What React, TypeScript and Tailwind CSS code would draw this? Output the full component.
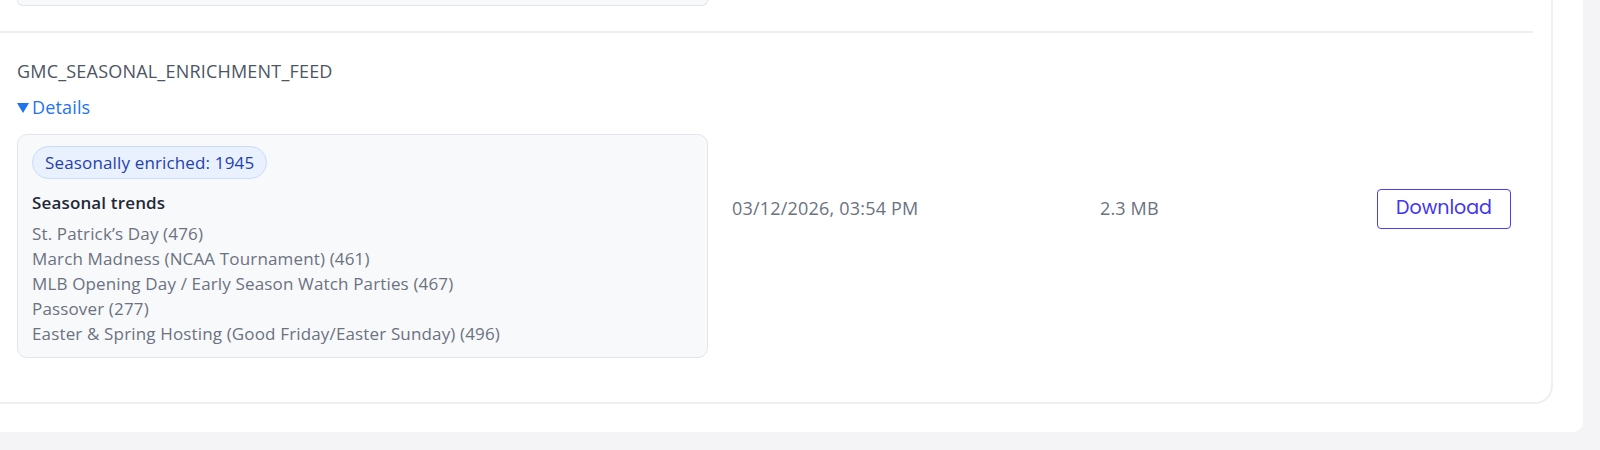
import React from "react";

const trends = [
  "St. Patrick\u2019s Day (476)",
  "March Madness (NCAA Tournament) (461)",
  "MLB Opening Day / Early Season Watch Parties (467)",
  "Passover (277)",
  "Easter & Spring Hosting (Good Friday/Easter Sunday) (496)",
];

export default function App() {
  return (
    <div
      className="h-[450px] w-[1600px] bg-[#f4f4f6] overflow-hidden tracking-[0.15px]"
      style={{ fontFamily: '"Open Sans", "Noto Sans", Arial, sans-serif' }}
    >
      <div className="w-[1583px] h-[432px] bg-white rounded-br-[10px] pr-[30px]">
        <div className="w-[1553px] h-[404px] border-r-2 border-b-2 border-[#efeff1] rounded-br-[18px] pr-[18px]">
          {/* previous row tail */}
          <div className="h-[31px] pl-[17px]">
            <div className="w-[691px] h-[6px] bg-[#f8f9fb] border-x border-b border-[#e2e5ea] rounded-b-[10px]" />
          </div>
          {/* row */}
          <div className="border-t-2 border-[#efeff1] flex items-center pl-[17px] pt-[26px]">
            <div className="w-[691px] flex flex-col">
              <div className="text-[18px] leading-[24px] text-[#4b5563] tracking-[0.2px]">
                GMC_SEASONAL_ENRICHMENT_FEED
              </div>
              <div className="mt-[12px] text-[18px] leading-[24px] text-[#1f74f0] flex items-center">
                <svg width="12" height="10" viewBox="0 0 12 10" className="mr-[3px] mt-[1px]">
                  <polygon points="0,0 12,0 6,10" fill="#1f74f0" />
                </svg>
                <span>Details</span>
              </div>
              <div className="mt-[15px] w-[691px] h-[224px] bg-[#f8f9fb] border border-[#e2e5ea] rounded-[10px] pt-[11px] pl-[14px]">
                <div className="inline-flex items-center h-[33px] px-[12px] rounded-full bg-[#eaf1fe] border border-[#c9dafb] text-[17px] text-[#1e40af]">
                  Seasonally enriched: 1945
                </div>
                <div className="mt-[13px] text-[17px] leading-[22px] font-semibold text-[#1f2937]">
                  Seasonal trends
                </div>
                <div className="mt-[7px] flex flex-col">
                  {trends.map((t) => (
                    <div key={t} className="text-[17px] leading-[25px] text-[#6b7280]">
                      {t}
                    </div>
                  ))}
                </div>
              </div>
            </div>
            <div className="ml-[24px] w-[368px] text-[18px] text-[#6b7280] tracking-[0.2px]">03/12/2026, 03:54 PM</div>
            <div className="w-[277px] text-[18px] text-[#6b7280]">2.3 MB</div>
            <div className="w-[134px]">
              <button
                className="w-[134px] h-[40px] border-[1.5px] border-[#4a3ff7] rounded-[4px] text-[19px] tracking-normal text-[#3f35f2] bg-white"
                style={{ fontFamily: 'Poppins, Lato, "Open Sans", sans-serif' }}
              >
                Download
              </button>
            </div>
          </div>
        </div>
      </div>
    </div>
  );
}
